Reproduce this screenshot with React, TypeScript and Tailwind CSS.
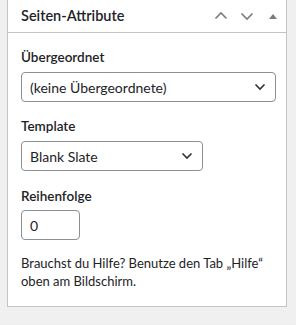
import React from "react";

function Chevron({ dir }: { dir: "up" | "down" }) {
  return (
    <svg width="14" height="14" viewBox="0 0 14 14" fill="none">
      {dir === "up" ? (
        <path d="M1.5 9.5 L7 4 L12.5 9.5" stroke="#787c82" strokeWidth="1.6" />
      ) : (
        <path d="M1.5 4.5 L7 10 L12.5 4.5" stroke="#787c82" strokeWidth="1.6" />
      )}
    </svg>
  );
}

function SelectArrow() {
  return (
    <svg width="12" height="8" viewBox="0 0 12 8" fill="none">
      <path d="M1.5 1.5 L6 6 L10.5 1.5" stroke="#2c3338" strokeWidth="1.6" />
    </svg>
  );
}

export default function App() {
  return (
    <div
      className="w-[296px] h-[325px] bg-[#f0f0f1] text-[#1d2327] overflow-hidden"
      style={{ fontFamily: 'Lato, sans-serif' }}
    >
      <div className="ml-[7px] w-[280px] h-[307px] bg-white border border-t-0 border-[#c3c4c7]">
        <div className="h-[33px] flex items-center justify-between border-b border-[#c3c4c7] pl-[13px]">
          <span className="text-[14.5px] font-semibold leading-none">Seiten-Attribute</span>
          <div className="flex items-center">
            <span className="w-[25px] flex justify-center"><Chevron dir="up" /></span>
            <span className="w-[27px] flex justify-center"><Chevron dir="down" /></span>
            <span className="w-[26px] flex justify-center">
              <svg width="10" height="8" viewBox="0 0 10 8">
                <path d="M1 7 L5 2 L9 7 Z" fill="#787c82" />
              </svg>
            </span>
          </div>
        </div>
        <div className="px-[13px] pt-[15px] text-[13.5px]">
          <div className="font-semibold leading-[18px]">Übergeordnet</div>
          <div className="mt-[6px] h-[30px] w-[255px] border border-[#8c8f94] rounded-[4px] flex items-center justify-between pl-[8px] pr-[9px]">
            <span className="text-[14px]">(keine Übergeordnete)</span>
            <SelectArrow />
          </div>
          <div className="mt-[15px] font-semibold leading-[18px]">Template</div>
          <div className="mt-[6px] h-[30px] w-[182px] border border-[#8c8f94] rounded-[4px] flex items-center justify-between pl-[8px] pr-[9px]">
            <span className="text-[14px]">Blank Slate</span>
            <SelectArrow />
          </div>
          <div className="mt-[16px] font-semibold leading-[18px]">Reihenfolge</div>
          <div className="mt-[5px] h-[30px] w-[59px] border border-[#8c8f94] rounded-[4px] flex items-center pl-[8px]">
            <span className="text-[14px]">0</span>
          </div>
          <p className="mt-[14px] leading-[18px] text-[13px]">
            Brauchst du Hilfe? Benutze den Tab „Hilfe“ oben am Bildschirm.
          </p>
        </div>
      </div>
    </div>
  );
}
